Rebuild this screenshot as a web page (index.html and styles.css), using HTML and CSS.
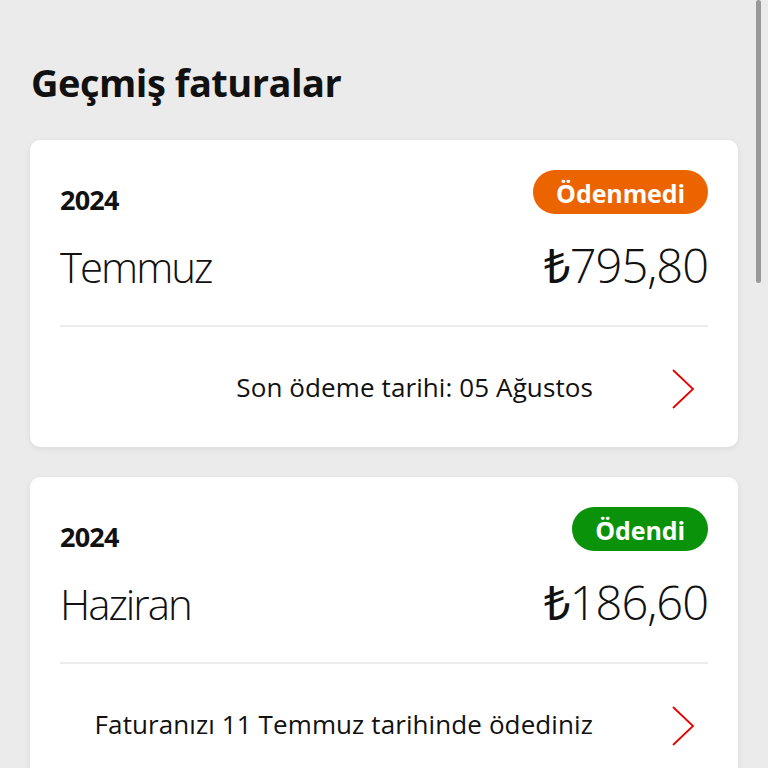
FILE: index.html
```html
<!DOCTYPE html>
<html lang="tr">
<head>
  <meta charset="UTF-8" />
  <title>Geçmiş faturalar</title>
  <link rel="stylesheet" href="styles.css">
</head>
<body>
  <div class="scrollbar"></div>

  <main class="page">
    <h1>Geçmiş faturalar</h1>

    <div class="card">
      <div class="card-top">
        <span class="year">2024</span>
        <span class="badge unpaid">Ödenmedi</span>
      </div>
      <div class="card-main">
        <span class="month">Temmuz</span>
        <span class="amount"><span class="lira">₺</span>795,80</span>
      </div>
      <div class="card-foot">
        <span class="note">Son ödeme tarihi: 05 Ağustos</span>
        <svg class="chevron" width="24" height="42" viewBox="0 0 24 42">
          <path d="M2 2 L22 21 L2 40" fill="none" stroke="#e60000" stroke-width="1.8" />
        </svg>
      </div>
    </div>

    <div class="card">
      <div class="card-top">
        <span class="year">2024</span>
        <span class="badge paid">Ödendi</span>
      </div>
      <div class="card-main">
        <span class="month">Haziran</span>
        <span class="amount"><span class="lira">₺</span>186,60</span>
      </div>
      <div class="card-foot">
        <span class="note">Faturanızı 11 Temmuz tarihinde ödediniz</span>
        <svg class="chevron" width="24" height="42" viewBox="0 0 24 42">
          <path d="M2 2 L22 21 L2 40" fill="none" stroke="#e60000" stroke-width="1.8" />
        </svg>
      </div>
    </div>
  </main>
</body>
</html>
```

FILE: styles.css
```css
body { margin: 0; background: #ebebeb; font-family: "Open Sans", "Noto Sans", sans-serif; color: #111; overflow: hidden; }
.page { padding: 0 30px; }
h1 { margin: 0; padding: 56px 0 32px 1px; font-size: 38px; font-weight: 700; line-height: 52px; letter-spacing: -0.5px; }

.card { background: #fff; border-radius: 10px; padding: 30px 30px 0; margin-bottom: 30px; box-shadow: 0 2px 6px rgba(0, 0, 0, 0.07); }
.card-top { display: flex; justify-content: space-between; align-items: flex-end; height: 44px; }
.year { font-size: 27px; font-weight: 700; line-height: 28px; letter-spacing: -0.8px; }
.badge { color: #fff; font-size: 25px; font-weight: 700; line-height: 42px; padding: 2px 23px 0; border-radius: 22px; letter-spacing: -0.1px; }
.unpaid { background: #ec6400; }
.paid { background: #0a920a; }

.card-main { display: flex; justify-content: space-between; align-items: baseline; margin-top: 23px; padding-bottom: 30px; border-bottom: 2px solid #ececec; }
.month { font-size: 42px; font-weight: 300; line-height: 56px; letter-spacing: -2px; }
.amount { font-size: 47px; font-weight: 300; line-height: 56px; letter-spacing: -1px; }
.lira { font-weight: 400; }

.card-foot { display: flex; justify-content: flex-end; align-items: center; height: 120px; }
.note { font-size: 26px; line-height: 34px; letter-spacing: 0.1px; }
.chevron { margin: 4px 13px 0 78px; }

.scrollbar { position: fixed; top: 0; right: 7px; width: 5px; height: 283px; border-radius: 3px; background: #999; }
```
